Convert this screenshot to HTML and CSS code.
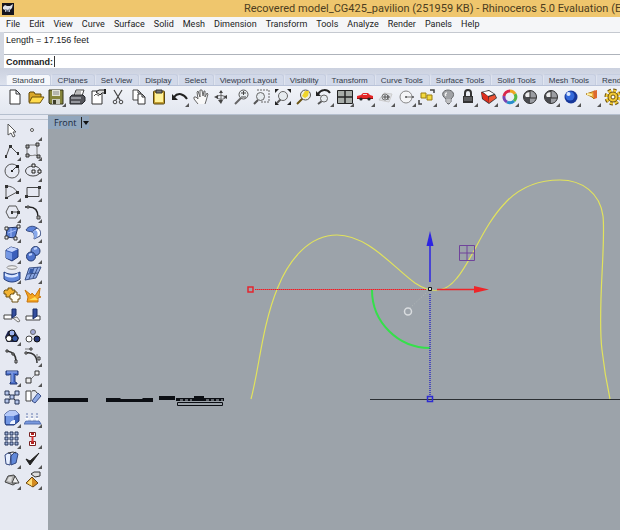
FILE: index.html
```html
<!DOCTYPE html>
<html lang="en">
<head>
<meta charset="utf-8">
<title>Rhinoceros 5.0</title>
<link rel="stylesheet" href="styles.css">
</head>
<body>
<div class="app">
<header class="titlebar">
  <svg class="logo" viewBox="0 0 12 12"><path fill="#16151d" d="M0 0h12v12H0z"/><path fill="#dfe2ea" d="M1 4l2-2 2 1 3 0 3-2-1 4-2 2 0 2-3-1-2 1 0-2-2-1z"/><path fill="#6b7385" d="M3 6l3 1 2-2-1 4-3-1z"/></svg>
  <h1 class="title">Recovered model_CG425_pavilion (251959 KB) - Rhinoceros 5.0 Evaluation (E</h1>
</header>
<nav class="menu">
  <a href="#">File</a><a href="#">Edit</a><a href="#">View</a><a href="#">Curve</a><a href="#">Surface</a><a href="#">Solid</a><a href="#">Mesh</a><a href="#">Dimension</a><a href="#">Transform</a><a href="#">Tools</a><a href="#">Analyze</a><a href="#">Render</a><a href="#">Panels</a><a href="#">Help</a>
</nav>
<section class="console">
  <p class="history">Length = 17.156 feet</p>
  <div class="prompt"><label for="command">Command:</label><input id="command" type="text"></div>
</section>
<nav class="tabs">
  <button class="tab active">Standard</button><button class="tab">CPlanes</button><button class="tab">Set View</button><button class="tab">Display</button><button class="tab">Select</button><button class="tab">Viewport Layout</button><button class="tab">Visibility</button><button class="tab">Transform</button><button class="tab">Curve Tools</button><button class="tab">Surface Tools</button><button class="tab">Solid Tools</button><button class="tab">Mesh Tools</button><button class="tab">Render</button>
</nav>
<div class="toolbar">
  <button class="tool" aria-label="New"><svg viewBox="0 0 18 18"><path d="M4 2h6l4 4v10H4zM10 2v4h4" fill="#fff" stroke="#333"/></svg></button>
  <button class="tool" aria-label="Open"><svg viewBox="0 0 18 18"><path d="M2 14V5l1-1h4l1 2h6v3" fill="#d9a72a" stroke="#5f4608"/><path d="M2 15l3-6h12l-4 6z" fill="#ffdb4c" stroke="#6d5108"/></svg></button>
  <button class="tool more" aria-label="Save"><svg viewBox="0 0 18 18"><path d="M2 2h14v14H3l-1-1z" fill="#85853b" stroke="#34351d"/><path d="M5 2h8v6H5z" fill="#e3e4d5"/><path d="M5 11h8v5H5z" fill="#c9cbbd"/><path d="M6 12h3v4H6z" fill="#3c3c29"/><path d="M6 4h6M6 6h6" stroke="#888"/></svg></button>
  <button class="tool" aria-label="Print"><svg viewBox="0 0 18 18"><path d="M6 8l2-6h8l-2 6" fill="#fff" stroke="#444"/><path d="M2 9l2-2h11l2 2v4l-3 3H2z" fill="#55565c" stroke="#25262a"/><path d="M3 10h10M3 14h9" stroke="#d4d6dd"/><path d="M8 4h5M8 6h5" stroke="#777"/></svg></button>
  <button class="tool" aria-label="Document properties"><svg viewBox="0 0 18 18"><path d="M3 3h7l3 3v10H3z" fill="#fff" stroke="#333"/><path d="M7 4l3-2h6v3h-3l-2 2z" fill="#ddd" stroke="#222"/><path d="M15 1h2v5h-2z" fill="#222"/><path d="M5 8l2-2 3 2" fill="none" stroke="#555"/></svg></button>
  <button class="tool" aria-label="Cut"><svg viewBox="0 0 18 18"><path d="M5 2l6 10M13 2L7 12" stroke="#444" fill="none" stroke-width="1.2"/><circle cx="6" cy="14" r="1.8" fill="none" stroke="#444"/><circle cx="12" cy="14" r="1.8" fill="none" stroke="#444"/></svg></button>
  <button class="tool" aria-label="Copy"><svg viewBox="0 0 18 18"><path d="M3 2h5l3 3v7H3zM8 2v3h3" fill="#fff" stroke="#444"/><path d="M8 6h4l3 3v7H8zM12 6v3h3" fill="#fff" stroke="#333"/></svg></button>
  <button class="tool" aria-label="Paste"><svg viewBox="0 0 18 18"><rect x="3.500" y="3" width="11" height="13" rx="1" fill="#c39e31" stroke="#5a480e"/><path d="M5 5h8v9H5z" fill="#fff29a"/><path d="M6 2h6v3H6z" fill="#77777a" stroke="#333"/></svg></button>
  <button class="tool more" aria-label="Undo"><svg viewBox="0 0 18 18"><path d="M3 9c4-5 10-3 13 2" fill="none" stroke="#222" stroke-width="2"/><path d="M1 6v6h6z" fill="#222"/></svg></button>
  <button class="tool" aria-label="Pan"><svg viewBox="0 0 18 18"><path d="M6 16l-4-5 0-2 2 0 2 2-1-7 1-1 2 6V2h2l1 6 1-5 1 0 0 6 2-4 1 1-2 7-1 3" fill="#f8f8f8" stroke="#666"/></svg></button>
  <button class="tool" aria-label="Rotate view"><svg viewBox="0 0 18 18"><path d="M9 3v11M4 9c2-2 7-2 10 0-2 3-7 3-10 0" fill="none" stroke="#666"/><path d="M9 2L7 5h4zM9 16l-3-4h5zM2 9l4-2v4zM11 9l4-2v4z" fill="#444"/></svg></button>
  <button class="tool" aria-label="Zoom"><svg viewBox="0 0 18 18"><path d="M8 10l-6 6" stroke="#666" stroke-width="2"/><circle cx="10.500" cy="6.500" r="4.500" fill="#e9eef2" stroke="#555"/><path d="M8 5h5M10.500 3v4M8 9h5" stroke="#444"/></svg></button>
  <button class="tool" aria-label="Zoom window"><svg viewBox="0 0 18 18"><path d="M4 2h12v12H7" fill="none" stroke="#666" stroke-dasharray="2 1"/><path d="M5 12l-4 4" stroke="#555" stroke-width="2"/><circle cx="7.500" cy="8.500" r="4" fill="#e6ebef" stroke="#666"/></svg></button>
  <button class="tool" aria-label="Zoom extents"><svg viewBox="0 0 18 18"><path d="M7 11l-4 4" stroke="#555" stroke-width="2"/><circle cx="9" cy="8" r="4.500" fill="#e6ebef" stroke="#666"/><path d="M1 1h4L1 5zM17 1v4l-4-4zM1 17v-4l4 4zM17 17h-4l4-4z" fill="#222"/></svg></button>
  <button class="tool" aria-label="Zoom selected"><svg viewBox="0 0 18 18"><path d="M8 10l-6 6" stroke="#6b5513" stroke-width="2"/><circle cx="10.500" cy="7" r="5" fill="#eeeeda" stroke="#555"/><path d="M7 8l3-5h4l-1 5-3 2z" fill="#efd52a"/></svg></button>
  <button class="tool more" aria-label="Undo view"><svg viewBox="0 0 18 18"><path d="M3 6c3-5 9-5 12-1" fill="none" stroke="#222" stroke-width="2"/><path d="M1 3v5h5z" fill="#222"/><path d="M7 13l-4 3" stroke="#555" stroke-width="2"/><circle cx="9" cy="10.500" r="3.500" fill="#e6ebef" stroke="#666"/></svg></button>
  <button class="tool more" aria-label="Four viewports"><svg viewBox="0 0 18 18"><path d="M1.500 2.500h15v13h-15z" fill="#a7aca8" stroke="#222"/><path d="M9 2v14M2 9h14" stroke="#222" stroke-width="1.500"/></svg></button>
  <button class="tool more" aria-label="Right view"><svg viewBox="0 0 18 18"><path d="M1 10V8l4-1 2-2h5l2 2 3 1v2z" fill="#e52727"/><path d="M7 6h4v1H7z" fill="#e9d7d7"/><path d="M1 10h16v1H1z" fill="#8e1010"/><circle cx="5" cy="11" r="1.600" fill="#222"/><circle cx="13" cy="11" r="1.600" fill="#222"/></svg></button>
  <button class="tool more" aria-label="Construction plane"><svg viewBox="0 0 18 18"><path d="M2 12l5-7 8 1-3 8z" fill="#dfe2e7" stroke="#ccc"/><circle cx="8" cy="9" r="3" fill="none" stroke="#777"/><path d="M8 7v4M6 9h7M11 7v5" stroke="#555"/></svg></button>
  <button class="tool more" aria-label="Object snap"><svg viewBox="0 0 18 18"><circle cx="8" cy="9" r="6" fill="#f4f5f7" stroke="#888"/><path d="M8 9h7" stroke="#777"/><circle cx="8" cy="9" r="1" fill="#555"/><circle cx="15" cy="9" r="1" fill="#555"/></svg></button>
  <button class="tool more" aria-label="Select"><svg viewBox="0 0 18 18"><path d="M3 5h5v5H3zM9 7h5v5H9z" fill="#f4da3f" stroke="#9a7d12"/><path d="M1 12v4h3M12 2h4v3" fill="none" stroke="#444" stroke-width="1.500"/></svg></button>
  <button class="tool more" aria-label="Lights"><svg viewBox="0 0 18 18"><path d="M7 11c-6-4-3-9 2-9s8 5 3 9v3l-2 2H9l-2-2z" fill="#a0a2a5" stroke="#65676a"/><path d="M8 5c-2 0-2 2-1 3" stroke="#eee" fill="none" stroke-width="1.500"/><path d="M7 12h5M7 14h5" stroke="#ddd"/></svg></button>
  <button class="tool more" aria-label="Lock"><svg viewBox="0 0 18 18"><path d="M6 9V5c0-4 6-4 6 0v4" fill="none" stroke="#333" stroke-width="2"/><path d="M4 8h10v7H4z" fill="#333"/><path d="M5 10h8M5 12h8" stroke="#86888c"/></svg></button>
  <button class="tool more" aria-label="Layers"><svg viewBox="0 0 18 18"><path d="M1 4l8-2 6 4 2 4-8 6-7-5z" fill="#383436"/><path d="M1 4l7 4 1 7-6-4z" fill="#df2e1d"/><path d="M3 4l6-1 5 3-6 2z" fill="#fff"/><path d="M9 9l6-2 1 3-7 5z" fill="#ee5234"/></svg></button>
  <button class="tool more" aria-label="Object properties"><svg viewBox="0 0 18 18" fill="none" stroke-width="3"><path d="M9 3a6 6 0 0 1 5 3" stroke="#eea520"/><path d="M14 6a6 6 0 0 1-1 7" stroke="#55b743"/><path d="M13 13a6 6 0 0 1-7 1" stroke="#278dcb"/><path d="M6 14a6 6 0 0 1-3-6" stroke="#7545b4"/><path d="M3 8a6 6 0 0 1 6-5" stroke="#d9254b"/></svg></button>
  <button class="tool" aria-label="Shade"><svg viewBox="0 0 18 18"><circle cx="9" cy="9" r="6.500" fill="#4b4c50" stroke="#333"/><path d="M9 3v12a6 6 0 0 0 0-12" fill="#9b9da2"/><path d="M9 4c-4 0-6 3-4 5h4" fill="#eee"/><path d="M9 3v7h6" stroke="#333" fill="none"/></svg></button>
  <button class="tool more" aria-label="Shade all"><svg viewBox="0 0 18 18"><circle cx="9" cy="9" r="6.500" fill="#4b4c50" stroke="#333"/><path d="M9 3v12a6 6 0 0 0 0-12" fill="#9b9da2"/><path d="M9 4c-4 0-6 3-4 5h4" fill="#eee"/><path d="M9 3v7h6" stroke="#333" fill="none"/></svg></button>
  <button class="tool more" aria-label="Render"><svg viewBox="0 0 18 18"><circle cx="9" cy="9" r="6.500" fill="#173799"/><circle cx="8" cy="8" r="4.500" fill="#3469da"/><circle cx="6.500" cy="6" r="2" fill="#dbe8ff"/></svg></button>
  <button class="tool more" aria-label="Spotlight"><svg viewBox="0 0 18 18"><path d="M3 6l9-3-1 8-2-2z" fill="#f2b23b" stroke="#aa771d"/><path d="M10 3l4-1 0 8-3 1z" fill="#dd692f"/><path d="M4 6l5 1" stroke="#fff0a2" stroke-width="2"/></svg></button>
  <button class="tool" aria-label="Options"><svg viewBox="0 0 18 18"><circle cx="9" cy="9" r="6.500" fill="none" stroke="#6c5310" stroke-width="4" stroke-dasharray="3 2"/><circle cx="9" cy="9" r="5" fill="#f2ca35" stroke="#6c5310"/><circle cx="9" cy="9" r="6.500" fill="none" stroke="#f2ca35" stroke-width="2" stroke-dasharray="3 2"/><circle cx="9" cy="9" r="2" fill="#fff" stroke="#6c5310"/></svg></button>
</div>
<main class="work">
<aside class="palette">
  <button class="tool" aria-label="Pointer"><svg viewBox="0 0 18 18"><path d="M5 3v11l3-2 2 4 2-1-2-4h3z" fill="#fff" stroke="#555"/></svg></button>
  <button class="tool more" aria-label="Point"><svg viewBox="0 0 18 18"><circle cx="8" cy="9" r="1.500" fill="#fff" stroke="#555"/></svg></button>
  <button class="tool more" aria-label="Polyline"><svg viewBox="0 0 18 18"><path d="M3 15L7 4l8 8" fill="none" stroke="#555"/><path d="M2 13h2v3H2zM6 3h3v3H6zM14 10h2v3h-2z" fill="#333"/></svg></button>
  <button class="tool more" aria-label="Control point curve"><svg viewBox="0 0 18 18"><path d="M13 3H6c-3 0-3 1-3 3v5c0 3 5 3 8 2l3 1M13 3v10" fill="none" stroke="#777"/><path d="M2 3h3v3H2zM12 1h3v3h-3zM2 12h3v3H2zM13 13h3v3h-3z" fill="#aaa" stroke="#333"/></svg></button>
  <button class="tool more" aria-label="Circle"><svg viewBox="0 0 18 18"><circle cx="9" cy="9" r="7" fill="none" stroke="#555"/><path d="M9 9l5-5" stroke="#444"/><path d="M8 8h2v2H8zM13 3h3v3h-3z" fill="#222"/></svg></button>
  <button class="tool more" aria-label="Ellipse"><svg viewBox="0 0 18 18"><ellipse cx="9" cy="9" rx="7.500" ry="5" fill="none" stroke="#444"/><path d="M8 2h3v3H8zM8 8h3v3H8zM14 8h3v3h-3z" fill="#eee" stroke="#222"/></svg></button>
  <button class="tool more" aria-label="Arc"><svg viewBox="0 0 18 18"><path d="M3 15V3c5 0 9 2 11 6z" fill="none" stroke="#555"/><path d="M2 2h3v3H2zM2 14h3v2H2zM13 8h3v3h-3z" fill="#333"/></svg></button>
  <button class="tool more" aria-label="Rectangle"><svg viewBox="0 0 18 18"><path d="M3 4.500h12v9H3z" fill="none" stroke="#444"/><path d="M1 12h3v3H1zM14 3h3v3h-3z" fill="#333"/></svg></button>
  <button class="tool more" aria-label="Polygon"><svg viewBox="0 0 18 18"><path d="M6 3h7l3 6-3 6H6L3 9z" fill="none" stroke="#555"/><path d="M9 9h6" stroke="#444"/><path d="M8 8h2v3H8zM14 8h3v3h-3z" fill="#333"/></svg></button>
  <button class="tool more" aria-label="Fillet curves"><svg viewBox="0 0 18 18"><path d="M1 4h4c7 0 9 5 9 10" fill="none" stroke="#222" stroke-width="1.500"/><path d="M3 3h2v2H3zM13 13h3v3h-3z" fill="#aaa" stroke="#444"/></svg></button>
  <button class="tool more" aria-label="Surface from points"><svg viewBox="0 0 18 18"><path d="M4 4l11-1-3 11-9-1z" fill="#597dd0" stroke="#20315f"/><path d="M2 3h3v3H2zM14 1h3v3h-3zM2 12h3v3H2zM11 13h3v3h-3z" fill="#eee" stroke="#333"/><path d="M5 9l8-3M8 4v9" stroke="#a9c1fa"/></svg></button>
  <button class="tool more" aria-label="Sweep surface"><svg viewBox="0 0 18 18"><path d="M2 6c2-4 7-5 11-2l-5 4c-2-1-4 0-6-2z" fill="#5c82d8" stroke="#344980"/><path d="M8 8l5-4c4 2 4 5 3 8l-6 3c1-3 0-6-2-7" fill="#f9fbff" stroke="#344980"/><path d="M8 8l3-2c3 1 3 4 2 7l-3 2c1-3 0-6-2-7" fill="#88a9eb"/></svg></button>
  <button class="tool more" aria-label="Box"><svg viewBox="0 0 18 18"><path d="M3 5l5-3 7 2v8l-6 4-6-3z" fill="#3b5fbb" stroke="#1f3571"/><path d="M3 5l5-3 7 2-6 3z" fill="#c5d5fd"/><path d="M3 6l6 2v7l-6-2z" fill="#7598e4"/></svg></button>
  <button class="tool more" aria-label="Spheres"><svg viewBox="0 0 18 18"><circle cx="11.500" cy="6" r="4.500" fill="#6989d5" stroke="#22396f"/><circle cx="7" cy="11.500" r="4.500" fill="#4e72ca" stroke="#22396f"/><path d="M5 10l3-1M10 4l3-1" stroke="#c0d4ff" stroke-width="2"/></svg></button>
  <button class="tool more" aria-label="Extrude"><svg viewBox="0 0 18 18"><ellipse cx="9" cy="2.500" rx="5" ry="1.800" fill="#eee" stroke="#888"/><path d="M1 7c5 3 11 3 16 0v7c-5 4-11 4-16 0z" fill="#6187da" stroke="#203a7a"/><path d="M2 8c5 3 9 3 13 0v3c-5 2-9 2-13 0z" fill="#dbe7ff"/></svg></button>
  <button class="tool more" aria-label="Mesh"><svg viewBox="0 0 18 18"><path d="M5 3l12-1-5 11-11 2z" fill="#8ca8e3" stroke="#3a5187"/><path d="M3 9l11-1M10 3L5 14M14 2L9 13" stroke="#3a5187"/><path d="M6 4h4L9 8H5z" fill="#3559a5"/></svg></button>
  <button class="tool" aria-label="Join"><svg viewBox="0 0 18 18"><path d="M2 4h3V2h4v2h3v4h-2v3H3V8H1V5z" fill="#f3b433" stroke="#6b4f12"/><path d="M8 8h3V6h3v3h3v4h-2v3H9v-3H7V9z" fill="#fffdf3" stroke="#6b4f12"/></svg></button>
  <button class="tool" aria-label="Explode"><svg viewBox="0 0 18 18"><path d="M3 16l1-5-3-7 6 5 1-2 3 3 5-8-1 8 2 1-3 1v4z" fill="#f5a51e" stroke="#c67510"/><path d="M5 14l6-3 3 3" fill="#ffdf5a"/></svg></button>
  <button class="tool" aria-label="Trim"><svg viewBox="0 0 18 18"><path d="M1 9h8v4H1z" fill="#fff" stroke="#444"/><path d="M10 12l4-1 3 4-2 1z" fill="#eee" stroke="#777"/><path d="M9 3h4v6l-4 3z" fill="#344e9e" stroke="#172b63"/></svg></button>
  <button class="tool" aria-label="Split"><svg viewBox="0 0 18 18"><path d="M2 10h14v4H2z" fill="#fff" stroke="#444"/><path d="M9 3h4v7l-4 3z" fill="#344e9e" stroke="#172b63"/></svg></button>
  <button class="tool more" aria-label="Group"><svg viewBox="0 0 18 18"><path d="M5 4l6-1 5 8-2 4H4l-2-5z" fill="#1c2450"/><circle cx="9" cy="6" r="3" fill="#9cb3ed" stroke="#111"/><circle cx="6" cy="11.500" r="3" fill="#fff" stroke="#111"/><circle cx="12" cy="11.500" r="3" fill="#3557a7" stroke="#111"/></svg></button>
  <button class="tool" aria-label="Ungroup"><svg viewBox="0 0 18 18"><circle cx="9" cy="5" r="2.500" fill="#a2aad7" stroke="#666"/><circle cx="5" cy="12" r="3" fill="#fff" stroke="#444"/><circle cx="13" cy="12" r="3" fill="#263675" stroke="#111"/></svg></button>
  <button class="tool" aria-label="Edit points"><svg viewBox="0 0 18 18"><path d="M4 4c6 1 9 4 9 10" fill="none" stroke="#333" stroke-width="1.500"/><path d="M3 3h2v2H3zM9 6h2v2H9zM12 13h2v3h-2z" fill="#ccc" stroke="#333"/></svg></button>
  <button class="tool more" aria-label="Control points"><svg viewBox="0 0 18 18"><path d="M2 6c6-1 11 2 11 10" fill="none" stroke="#333" stroke-width="1.500"/><path d="M1 2h5M13 7v4" stroke="#777"/><path d="M1 5h2v2H1zM6 1h2v2H6zM14 10h2v3h-2z" fill="#eee" stroke="#333"/></svg></button>
  <button class="tool more" aria-label="Text"><svg viewBox="0 0 18 18"><path d="M3 3h12v4h-2l-1-1v8l2 1v1H7v-1l1-1V6L6 7H3z" fill="#4e73cf" stroke="#213672"/><path d="M4 4h10M9 5v9" stroke="#a3b9f1"/></svg></button>
  <button class="tool more" aria-label="Move"><svg viewBox="0 0 18 18"><path d="M4 14l9-9" stroke="#555" stroke-dasharray="2 1"/><path d="M2 10h5v5H2zM11 3h4v4h-4z" fill="#eee" stroke="#333"/></svg></button>
  <button class="tool" aria-label="Block"><svg viewBox="0 0 18 18"><path d="M5 5l8 8M5 13l9-8" stroke="#333"/><g fill="#b8c8ec" stroke="#283657"><path d="M2 3h4v4H2zM12 3h4v4h-4zM2 11h4v4H2zM12 12h4v4h-4zM7 7h4v4H7z"/></g></svg></button>
  <button class="tool" aria-label="Rotate"><svg viewBox="0 0 18 18"><path d="M2 3h5v10H2z" fill="#fff" stroke="#444"/><path d="M8 13l6-8 3 3-6 7z" fill="#8ea9e5" stroke="#3b4f87"/><path d="M8 3c3-1 4 0 5 2" stroke="#333" fill="none"/></svg></button>
  <button class="tool more" aria-label="Boolean"><svg viewBox="0 0 18 18"><path d="M2 5l4-3h7l3 3v7l-5 4H3l-1-2z" fill="#3e63bb" stroke="#1c3473"/><path d="M2 5l4-3h7l3 3-5 2H2z" fill="#b4c9f8"/><path d="M3 7h8v4c-3 0-4 1-4 4H3z" fill="#7196e3"/><path d="M7 15c0-3 2-4 5-4v4z" fill="#eef4ff"/></svg></button>
  <button class="tool more" aria-label="Project"><svg viewBox="0 0 18 18"><path d="M2 12h13l2 3H0z" fill="#7898df" stroke="#536ead"/><path d="M3 4v7M8 4v7M13 4v7" stroke="#667bb0" stroke-dasharray="2 1"/><path d="M1 9h4l-2 3zM6 9h4l-2 3zM11 9h4l-2 3z" fill="#fff"/></svg></button>
  <button class="tool more" aria-label="Array"><svg viewBox="0 0 18 18"><g fill="#9fb1d7" stroke="#27365d"><path d="M2 2h3v3H2zM7 2h3v3H7zM12 2h3v3h-3zM2 7h3v3H2zM7 7h3v3H7zM12 7h3v3h-3zM2 12h3v3H2zM7 12h3v3H7zM12 12h3v3h-3z"/></g></svg></button>
  <button class="tool more" aria-label="Align"><svg viewBox="0 0 18 18"><path d="M5.500 2.500h6v4h-6zM5.500 11.500h6v4h-6z" fill="#fff" stroke="#722"/><path d="M8.500 6v6" stroke="#d93333" stroke-width="2"/><path d="M7 4h3M7 13h3" stroke="#b32121" stroke-width="2"/></svg></button>
  <button class="tool more" aria-label="Bend"><svg viewBox="0 0 18 18"><path d="M2 5l3-2 3 1-1 11-4-1z" fill="#e7efff" stroke="#33477e"/><path d="M8 6l4-4 3 2-2 9-5 2z" fill="#6289d9" stroke="#33477e"/><path d="M5 3l5-1 3 1" stroke="#333" fill="none"/></svg></button>
  <button class="tool more" aria-label="Check"><svg viewBox="0 0 18 18"><path d="M2 9l4 6L15 3 6 11z" fill="#222" stroke="#222"/></svg></button>
  <button class="tool more" aria-label="Analyze mesh"><svg viewBox="0 0 18 18"><path d="M2 11l3-6 6-1 4 7-5 3z" fill="#aaa" stroke="#444"/><path d="M9 12l3-7 4 7z" fill="#eee" stroke="#444"/><path d="M4 10l2-4 3 0-1 5z" fill="#ddd"/></svg></button>
  <button class="tool more" aria-label="Render mesh"><svg viewBox="0 0 18 18"><path d="M2 12l6-6 6 6-5 4z" fill="#d48b20" stroke="#694511"/><path d="M3 12l5-5v8z" fill="#ffe07a"/><path d="M7 3l3-2h6v4l-5 1z" fill="#ddd" stroke="#333"/></svg></button>
</aside>
<section class="viewport">
  <div class="view-title"><span>Front</span><button class="view-menu" aria-label="Viewport menu"></button></div>
  <svg class="scene" viewBox="48 115 572 415" preserveAspectRatio="xMinYMin slice" fill="none">
    <g fill="#0c0f14">
      <path d="M48 398h40v4H48zM106 398h14l1 1h21l1-1h10v4h-47zM159 396h16v4h-16zM176 398h18v-2h10v2h20v3h-48z"/>
    </g>
    <path d="M177.500 402.500h45v3h-45z" stroke="#0c0f14"/>
    <path d="M180 400h12M206 400h17" stroke="#b7bdc3" stroke-dasharray="3 2"/>
    <path d="M370 399.500h250" stroke="#2b2f33"/>
    <path d="M251 399C259 370 262 325 278 287C289 260 309 235 337 235C368 235 394 268 415 283C433 295 446 292 457 278C473 259 483 225 507 201C521 187 540 180 560 180C582 180 600 193 603 216C606 245 597 310 602 350C604 368 607 385 610 399" stroke="#e2e35c" stroke-width="1.200"/>
    <path d="M372 290a58 58 0 0 0 58 58" stroke="#35e04a" stroke-width="2"/>
    <path d="M255 289.500h171" stroke="#cf5a60"/>
    <path d="M255 289.500h171" stroke="#f01c24" stroke-dasharray="1 1"/>
    <path d="M430 294v102" stroke="#2d2bc4" stroke-width="1.500" stroke-dasharray="1 1"/>
    <path d="M410 308l17-16" stroke="#c8ccc5" stroke-dasharray="1 2" opacity=".5"/>
    <path d="M437 289.500h39" stroke="#ee2529" stroke-width="1.500"/>
    <path d="M474 286l15 3.500-15 3.500z" fill="#ee2529"/>
    <path d="M430 282v-38" stroke="#2d24e2" stroke-width="1.500"/>
    <path d="M426.500 246l3.500-15 3.500 15z" fill="#2d24e2"/>
    <path d="M248 287h5v5h-5z" stroke="#e3262f" stroke-width="1.500"/>
    <path d="M427.500 396.500h5v5h-5z" stroke="#2d2bd2" stroke-width="1.500"/>
    <path d="M428.500 287.500h3v3h-3z" fill="#dfe3e6" stroke="#111"/>
    <circle cx="408" cy="311.500" r="3.500" stroke="#d9dcdf" stroke-width="1.500"/>
    <path d="M459.500 245.500h15v15h-15zM467 245v15M459 253h15" stroke="#70449b"/>
  </svg>
</section>
</main>
</div>
</body>
</html>
```
FILE: styles.css
```css
* { box-sizing: border-box; }

body {
  margin: 0;
  font: 9px/12px "Liberation Sans", Arial, sans-serif;
  color: #222;
  overflow: hidden;
}

button, input {
  margin: 0;
  padding: 0;
  border: 0;
  background: none;
  font: inherit;
  color: inherit;
}

.app {
  display: flex;
  flex-direction: column;
  height: 100vh;
  background: #e6e9f2;
}

.titlebar {
  display: flex;
  align-items: center;
  height: 17px;
  padding-left: 2px;
  background: #efc66d;
  overflow: hidden;
}

.logo {
  flex: none;
  width: 12px;
  height: 12px;
}

.title {
  margin: 0 0 0 230px;
  font: 11px/16px Roboto, sans-serif;
  color: #4c3d20;
  white-space: nowrap;
}

.menu {
  display: flex;
  gap: 9px;
  height: 15px;
  padding-left: 6px;
  background: #f5f6f8;
  font: 9px/15px Roboto, sans-serif;
}

.menu a {
  color: #222;
  text-decoration: none;
}

.console {
  padding-left: 4px;
  background: #d3d8e2;
}

.history {
  height: 22px;
  margin: 0;
  padding: 1px 2px;
  border-top: 1px solid #c5c9d0;
  background: #fff;
}

.prompt {
  display: flex;
  align-items: center;
  gap: 1px;
  height: 14px;
  padding-left: 2px;
  border-top: 1px solid #aeb3bb;
  background: #fff;
  font-weight: bold;
}

.prompt input {
  flex: 1;
  height: 11px;
  border-left: 1px solid #333;
  outline: 0;
}

.tabs {
  display: flex;
  height: 18px;
  padding: 6px 0 0 6px;
  background: linear-gradient(#cbd1df, #dce1ed);
  border-bottom: 1px solid #b9c3d9;
  overflow: hidden;
  font-size: 8px;
}

.tab {
  flex: none;
  padding: 0 6px 0 5px;
  height: 12px;
  line-height: 11px;
  color: #343b49;
  background: #d2d9e9;
  border: 1px solid #c6cee0;
  border-bottom: 0;
  border-left-color: #dfe4ef;
  border-radius: 3px 3px 0 0;
  white-space: nowrap;
}

.tab.active {
  background: #f5f7fb;
}

.toolbar {
  display: grid;
  grid-template-columns: repeat(30, 1fr);
  height: 29px;
  margin-right: -3px;
  padding: 0 0 7px 5px;
  background: linear-gradient(#f1f3f8, #e3e7f0);
  border-bottom: 1px solid #b5bfce;
}

.tool {
  position: relative;
  display: grid;
  place-items: center;
}

.tool svg {
  width: 18px;
  height: 18px;
}

.more::after {
  content: "";
  position: absolute;
  right: 1px;
  bottom: 0;
  border: 2px solid #555;
  border-top-color: transparent;
  border-left-color: transparent;
}

.work {
  display: flex;
  flex: 1;
  min-height: 0;
}

.palette {
  display: grid;
  grid-template-columns: 21px 21px;
  grid-auto-rows: 1fr;
  flex: none;
  width: 48px;
  height: 371px;
  margin-top: 4px;
  padding-left: 1px;
  border-top: 1px solid #c1c6d0;
}

.viewport {
  position: relative;
  flex: 1;
  min-width: 0;
  background: #9ca3aa;
  overflow: hidden;
}

.scene {
  display: block;
  width: 100%;
  height: 100%;
}

.view-title {
  position: absolute;
  top: 1px;
  left: 0;
  display: flex;
  align-items: center;
  gap: 5px;
  height: 13px;
  padding-left: 6px;
  background: #91a6bc;
  color: #17263c;
  font: 9px/13px "Open Sans", sans-serif;
}

.view-menu {
  width: 8px;
  height: 11px;
  border-left: 1px solid #222;
}

.view-menu::after {
  content: "";
  display: block;
  margin-left: 1px;
  border: 3px solid transparent;
  border-top: 4px solid #111;
  border-bottom: 0;
}
```
